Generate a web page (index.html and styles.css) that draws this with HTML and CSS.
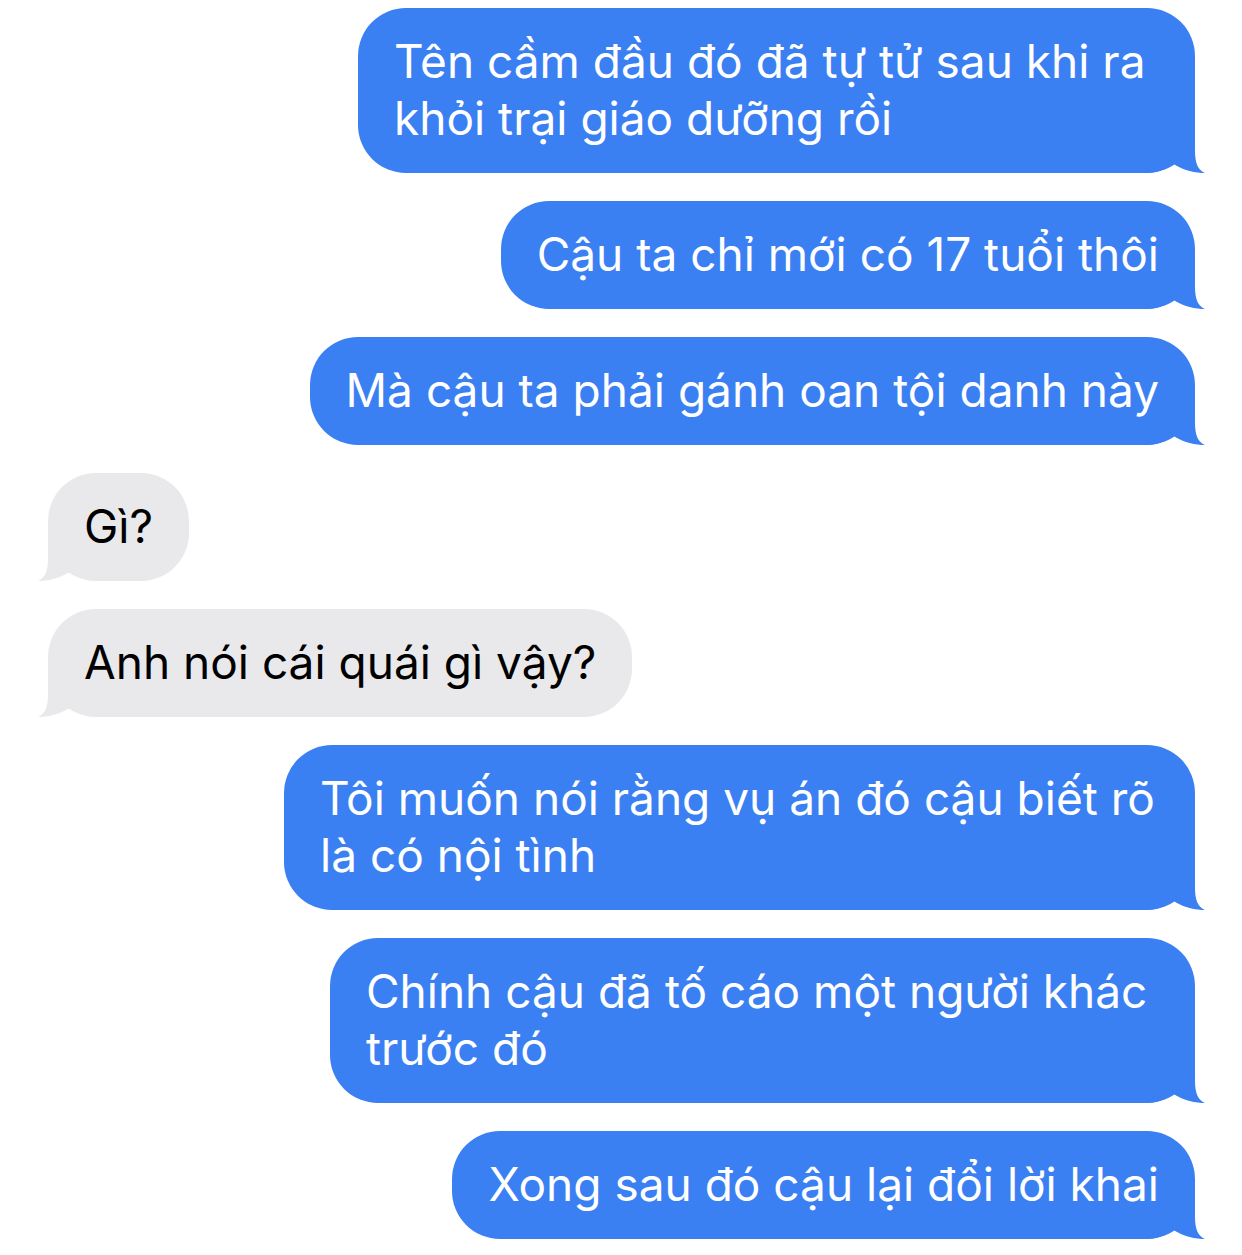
FILE: index.html
```html
<!DOCTYPE html>
<html lang="vi">
<head>
<meta charset="utf-8">
<title>Tin nhắn</title>
<link rel="stylesheet" href="styles.css">
</head>
<body>
<main class="thread">
  <div class="bubble sent w1">Tên cầm đầu đó đã tự tử sau khi ra<br>khỏi trại giáo dưỡng rồi<svg class="tail" viewBox="0 0 60 50" width="60" height="50"><path d="M0,0 H50 V28 C50,40 53,47 60,50 C51,50 39,48 27,40 C21,46 13,50 0,50 Z"/></svg></div>
  <div class="bubble sent">Cậu ta chỉ mới có 17 tuổi thôi<svg class="tail" viewBox="0 0 60 50" width="60" height="50"><path d="M0,0 H50 V28 C50,40 53,47 60,50 C51,50 39,48 27,40 C21,46 13,50 0,50 Z"/></svg></div>
  <div class="bubble sent">Mà cậu ta phải gánh oan tội danh này<svg class="tail" viewBox="0 0 60 50" width="60" height="50"><path d="M0,0 H50 V28 C50,40 53,47 60,50 C51,50 39,48 27,40 C21,46 13,50 0,50 Z"/></svg></div>
  <div class="bubble recv">Gì?<svg class="tail" viewBox="0 0 60 50" width="60" height="50"><path d="M60,0 H10 V28 C10,40 7,47 0,50 C9,50 21,48 33,40 C39,46 47,50 60,50 Z"/></svg></div>
  <div class="bubble recv">Anh nói cái quái gì vậy?<svg class="tail" viewBox="0 0 60 50" width="60" height="50"><path d="M60,0 H10 V28 C10,40 7,47 0,50 C9,50 21,48 33,40 C39,46 47,50 60,50 Z"/></svg></div>
  <div class="bubble sent w6">Tôi muốn nói rằng vụ án đó cậu biết rõ<br>là có nội tình<svg class="tail" viewBox="0 0 60 50" width="60" height="50"><path d="M0,0 H50 V28 C50,40 53,47 60,50 C51,50 39,48 27,40 C21,46 13,50 0,50 Z"/></svg></div>
  <div class="bubble sent w7">Chính cậu đã tố cáo một người khác<br>trước đó<svg class="tail" viewBox="0 0 60 50" width="60" height="50"><path d="M0,0 H50 V28 C50,40 53,47 60,50 C51,50 39,48 27,40 C21,46 13,50 0,50 Z"/></svg></div>
  <div class="bubble sent">Xong sau đó cậu lại đổi lời khai<svg class="tail" viewBox="0 0 60 50" width="60" height="50"><path d="M0,0 H50 V28 C50,40 53,47 60,50 C51,50 39,48 27,40 C21,46 13,50 0,50 Z"/></svg></div>
</main>
</body>
</html>
```

FILE: styles.css
```css
html, body {
  margin: 0;
  padding: 0;
  background: #ffffff;
}

.thread {
  display: flex;
  flex-direction: column;
  gap: 28px;
  padding: 8px 47px 0 48px;
  font-family: "Inter", "Noto Sans", "Liberation Sans", sans-serif;
}

.bubble {
  position: relative;
  isolation: isolate;
  box-sizing: border-box;
  padding: 25px 36px 26px 36px;
  border-radius: 48px;
  font-size: 46px;
  line-height: 57px;
  letter-spacing: 0;
  white-space: nowrap;
}

.tail {
  position: absolute;
  bottom: 0;
  z-index: -1;
}

.sent {
  align-self: flex-end;
  background: #3b80f2;
  color: #ffffff;
}

.sent .tail {
  right: -10px;
  fill: #3b80f2;
}

.recv {
  align-self: flex-start;
  background: #e9e9eb;
  color: #000000;
}

.recv .tail {
  left: -10px;
  fill: #e9e9eb;
}

.w1 { width: 837px; }
.w6 { width: 911px; }
.w7 { width: 865px; }
```
